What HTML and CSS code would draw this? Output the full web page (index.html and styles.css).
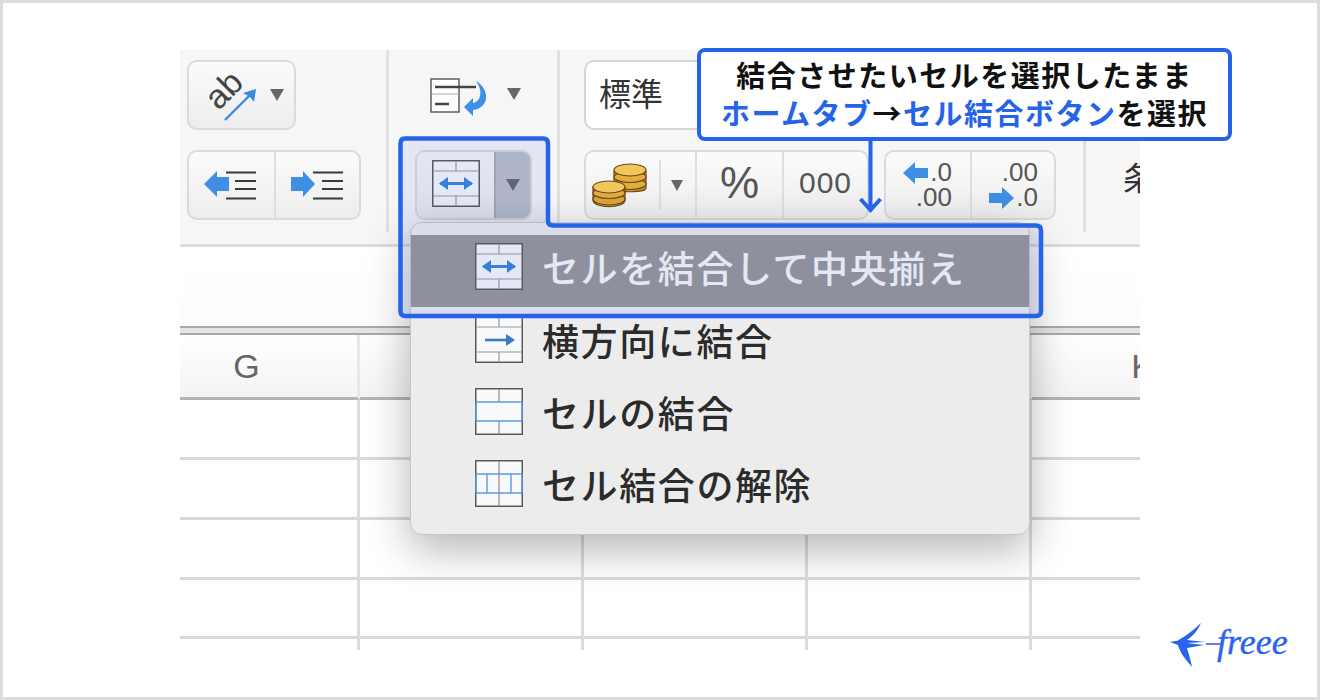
FILE: index.html
```html
<!DOCTYPE html>
<html lang="ja">
<head>
<meta charset="utf-8">
<title>セルの結合</title>
<link rel="stylesheet" href="styles.css">
</head>
<body>
<div class="frame">
  <div class="stage">
    <div class="ribbon">
      <div class="group group-a">
        <div class="btn btn-orient">
          <svg width="68" height="66" viewBox="0 0 68 66">
            <text x="22" y="39" text-anchor="middle" transform="rotate(-45 22 28)" class="ab">ab</text>
            <path d="M23 58 L50 31" stroke="#3b8ae0" stroke-width="2.400" fill="none"/>
            <path d="M54 27 L52 40 L48 35 L41 31 Z" fill="#3b8ae0"/>
          </svg>
          <span class="caret"></span>
        </div>
        <div class="btn btn-row btn-indent">
          <div class="seg seg-indent seg-indent-l">
            <svg width="52" height="30" viewBox="0 0 52 30">
              <path d="M0 14 L13 1 V7 H25 V21 H13 V27 Z" fill="#3f8fe6"/>
              <path d="M22 2.500H52 M31 11H52 M31 19H52 M22 28.500H52" stroke="#3a3a3a" stroke-width="2.200"/>
            </svg>
          </div>
          <div class="seg seg-indent">
            <svg width="52" height="30" viewBox="0 0 52 30">
              <path d="M24 14 L12 1 V7 H0 V21 H12 V27 Z" fill="#3f8fe6"/>
              <path d="M22 2.500H52 M31 11H52 M31 19H52 M22 28.500H52" stroke="#3a3a3a" stroke-width="2.200"/>
            </svg>
          </div>
        </div>
      </div>

      <div class="group group-b">
        <div class="wrap-row">
          <svg width="60" height="40" viewBox="0 0 60 40">
            <rect x="1" y="2" width="28" height="33" fill="#fff" stroke="#555" stroke-width="1.400"/>
            <path d="M1 17H29" stroke="#aaa" stroke-width="1"/>
            <path d="M5 10H46 M5 27H19" stroke="#444" stroke-width="2.400"/>
            <path d="M46 4 C60 12 60 31 43 33 L43 39 L34 30 L43 21 L43 26 C50 25 54 15 46 4Z" fill="#3f8fe6"/>
          </svg>
          <span class="caret"></span>
        </div>
        <div class="btn btn-row btn-merge">
          <div class="seg seg-merge-main">
            <svg class="merge-icon" width="48" height="47" viewBox="0 0 48 47"><use href="#cells"/><path d="M8 23.500H40" stroke="#3584dc" stroke-width="3"/><path d="M7 23.500L16 17V30Z M41 23.500L32 17V30Z" fill="#3584dc"/></svg>
          </div>
          <div class="seg seg-merge-drop"><span class="caret"></span></div>
        </div>
      </div>

      <div class="group group-c">
        <div class="field">標準</div>
        <div class="row-c">
          <div class="btn btn-row btn-num">
            <div class="seg seg-coins">
              <svg width="56" height="46" viewBox="0 0 56 46">
                <g stroke="#6b4a14" stroke-width="1.200" fill="#c9952f">
                  <path d="M22 9 V26 C22 31 54 31 54 26 V9 Z"/>
                  <ellipse cx="38" cy="22" rx="16" ry="5.500" fill="#e2ac3f"/>
                  <ellipse cx="38" cy="15" rx="16" ry="5.500" fill="#e2ac3f"/>
                  <ellipse cx="38" cy="8" rx="16" ry="6" fill="#f1c65a"/>
                  <path d="M1 25 V38 C1 47 33 47 33 38 V25 Z"/>
                  <ellipse cx="17" cy="37" rx="16" ry="6" fill="#dca53b"/>
                  <ellipse cx="17" cy="31" rx="16" ry="5.500" fill="#e2ac3f"/>
                  <ellipse cx="17" cy="25" rx="16" ry="6" fill="#f1c65a"/>
                </g>
              </svg>
            </div>
            <div class="seg seg-coin-drop"><span class="caret caret-sm"></span></div>
            <div class="seg seg-pct">%</div>
            <div class="seg seg-thou">000</div>
          </div>
          <div class="btn btn-row btn-dec">
            <div class="seg seg-dec">
              <div class="dec-line"><svg width="25" height="24" viewBox="0 0 25 24"><path d="M0 12 L12 1 V7 H25 V17 H12 V23Z" fill="#3f8fe6"/></svg><span>.0</span></div>
              <div class="dec-line"><span>.00</span></div>
            </div>
            <div class="seg seg-dec seg-dec-r">
              <div class="dec-line"><span>.00</span></div>
              <div class="dec-line"><svg width="25" height="24" viewBox="0 0 25 24"><path d="M25 12 L13 1 V7 H0 V17 H13 V23Z" fill="#3f8fe6"/></svg><span>.0</span></div>
            </div>
          </div>
        </div>
      </div>

      <div class="group group-d"><span class="cond">条</span></div>
    </div>

    <div class="band"></div>
    <div class="rule"></div>

    <div class="sheet">
      <div class="cell head">G</div><div class="cell head"></div><div class="cell head"></div><div class="cell head"></div><div class="cell head">K</div>
      <div class="cell"></div><div class="cell"></div><div class="cell"></div><div class="cell"></div><div class="cell"></div>
      <div class="cell"></div><div class="cell"></div><div class="cell"></div><div class="cell"></div><div class="cell"></div>
      <div class="cell"></div><div class="cell"></div><div class="cell"></div><div class="cell"></div><div class="cell"></div>
      <div class="cell"></div><div class="cell"></div><div class="cell"></div><div class="cell"></div><div class="cell"></div>
      <div class="cell end"></div><div class="cell end"></div><div class="cell end"></div><div class="cell end"></div><div class="cell end"></div>
    </div>
  </div>

  <div class="menu">
    <div class="item selected">
      <svg width="48" height="47" viewBox="0 0 48 47"><use href="#cells"/><path d="M8 23.500H40" stroke="#3584dc" stroke-width="3"/><path d="M7 23.500L16 17V30Z M41 23.500L32 17V30Z" fill="#3584dc"/></svg>
      <span>セルを結合して中央揃え</span>
    </div>
    <div class="item">
      <svg width="48" height="47" viewBox="0 0 48 47"><use href="#cells"/><path d="M10 24H36" stroke="#3a7cc9" stroke-width="2.600"/><path d="M40 24L31 18V30Z" fill="#3a7cc9"/></svg>
      <span>横方向に結合</span>
    </div>
    <div class="item">
      <svg width="48" height="47" viewBox="0 0 48 47"><use href="#frame-only"/><path d="M24 1V14 M24 33V46" stroke="#777" stroke-width="1"/><path d="M1 14H47 M1 33H47 M1 14V33 M47 14V33" stroke="#5b9be0" stroke-width="1.400" fill="none"/></svg>
      <span>セルの結合</span>
    </div>
    <div class="item">
      <svg width="48" height="47" viewBox="0 0 48 47"><use href="#frame-only"/><path d="M24 1V46" stroke="#777" stroke-width="1"/><path d="M1 14H47 M1 33H47 M12 14V33 M36 14V33 M1 14V33 M47 14V33" stroke="#5b9be0" stroke-width="1.400" fill="none"/></svg>
      <span>セル結合の解除</span>
    </div>
  </div>

  <svg class="marks" width="1320" height="700" viewBox="0 0 1320 700">
    <path class="mark-area" d="M405 138.500H543Q548 138.500 548 143.500V220.500Q548 225.500 553 225.500H1036Q1041 225.500 1041 230.500V311Q1041 316 1036 316H405Q400.500 316 400.500 311V143.500Q400.500 138.500 405 138.500Z"/>
    <path class="mark-line" d="M870.500 140V210 M860.500 199L870.500 210L880.500 199"/>
  </svg>

  <div class="callout">
    <p>結合させたいセルを選択したまま</p>
    <p><em>ホームタブ</em>→<em>セル結合ボタン</em>を選択</p>
  </div>

  <div class="logo">
    <svg width="52" height="48" viewBox="0 0 52 48">
      <path d="M0 20 C3 19 5 19 7 19 C14 15 24 8 31 1 C28 8 23 14 17 18 L35 20 L17 21 L34 23 L17 26 C19 33 21 39 22 45 C16 38 10 31 8 23 C5 22 3 21 0 20Z" fill="#2864ee"/>
      <path d="M36 22H52" stroke="#2864ee" stroke-width="1.600"/>
    </svg>
    <span class="logo-word">freee</span>
  </div>

  <svg class="defs" width="0" height="0">
    <defs>
      <g id="frame-only">
        <rect x="0.750" y="0.750" width="46.500" height="45.500" fill="#f8f9fb" stroke="#5a5a5a" stroke-width="1.500"/>
      </g>
      <g id="cells">
        <use href="#frame-only"/>
        <path d="M1 11H47 M1 36H47 M24 1V11 M24 36V46" stroke="#9a9a9a" stroke-width="1.200"/>
      </g>
    </defs>
  </svg>
</div>
</body>
</html>
```
FILE: styles.css
```css
* { box-sizing: border-box; }
html, body { margin: 0; padding: 0; }
body {
  width: 1320px;
  height: 700px;
  overflow: hidden;
  background: #fff;
  font-family: "Noto Sans CJK JP", sans-serif;
}
.frame {
  position: relative;
  width: 1320px;
  height: 700px;
  padding: 50px 0 0 180px;
  box-shadow: inset 0 0 0 3px #dcdcdc;
}
.stage {
  width: 960px;
  height: 600px;
  overflow: hidden;
  display: flex;
  flex-direction: column;
}

/* ribbon */
.ribbon {
  height: 197px;
  flex: none;
  display: flex;
  align-items: flex-start;
  background: #f6f6f6;
  border-bottom: 3px solid #dddddd;
}
.group {
  height: 182px;
  display: flex;
  flex-direction: column;
  gap: 20px;
  padding-top: 10px;
  border-right: 3px solid #e0e0e0;
  flex: none;
}
.group-a { width: 209px; padding-left: 7px; }
.group-b { width: 171px; padding-left: 26px; }
.group-c { width: 526px; padding-left: 24px; }
.group-d { border-right: 0; padding: 108px 0 0 37px; }
.btn {
  height: 70px;
  border: 2px solid #dadada;
  border-radius: 10px;
  background: linear-gradient(#fbfbfb, #ededed);
  flex: none;
}
.btn-row { display: flex; }
.btn-orient {
  width: 109px;
  display: flex;
  align-items: center;
  padding-left: 13px;
}
.ab {
  font-family: "Liberation Sans", sans-serif;
  font-size: 34px;
  fill: #444;
}
.caret {
  display: block;
  width: 0;
  height: 0;
  border-left: 7.500px solid transparent;
  border-right: 7.500px solid transparent;
  border-top: 12px solid #666;
  flex: none;
}
.caret-sm {
  border-left-width: 6.500px;
  border-right-width: 6.500px;
  border-top-width: 11px;
}
.seg {
  display: flex;
  align-items: center;
  justify-content: center;
  height: 100%;
}
.seg + .seg { border-left: 2px solid #dedede; }
.btn-indent { width: 174px; }
.seg-indent { flex: 1; padding-right: 2px; }
.seg-indent-l { padding-right: 4px; }
.wrap-row {
  height: 70px;
  padding: 17px 0 0 15px;
  display: flex;
  align-items: flex-start;
  gap: 17px;
}
.wrap-row .caret { margin-top: 11px; }
.btn-merge { width: 117px; overflow: hidden; }
.seg-merge-main { width: 77px; background: linear-gradient(#f6f6f6, #ededed); }
.merge-icon { margin-bottom: 4px; }
.seg.seg-merge-drop { flex: 1; background: #bcbfc8; border-left: 2px solid #a9abb3; }
.field {
  width: 220px;
  height: 70px;
  padding-left: 13px;
  background: #fff;
  border: 2px solid #d6d6d6;
  border-radius: 10px;
  font-size: 32px;
  line-height: 60px;
  color: #333;
}
.row-c { display: flex; gap: 15px; }
.btn-num { width: 285px; }
.seg-coins { width: 73px; padding-right: 6px; }
.seg.seg-coin-drop {
  width: 36px;
  border-left: 0;
  background: linear-gradient(#dedede, #dedede) left center / 2px 50px no-repeat;
}
.seg-pct {
  width: 87px;
  padding-bottom: 4px;
  font-family: "Liberation Sans", sans-serif;
  font-size: 44px;
  color: #555;
}
.seg-thou {
  flex: 1;
  padding-bottom: 4px;
  font-family: "Liberation Sans", sans-serif;
  font-size: 30px;
  letter-spacing: 1px;
  color: #555;
}
.btn-dec { width: 172px; }
.seg-dec {
  flex: 1;
  flex-direction: column;
  align-items: flex-end;
  padding-right: 18px;
  font-family: "Liberation Sans", sans-serif;
  font-size: 26px;
  color: #555;
  line-height: 25px;
}
.seg-dec-r { padding-right: 16px; }
.dec-line { display: flex; align-items: center; gap: 2px; height: 25px; }
.cond {
  display: block;
  width: 32px;
  font-size: 32px;
  line-height: 36px;
  color: #333;
}

/* sheet */
.band { height: 79px; flex: none; background: linear-gradient(#fff, #fdfdfd); }
.rule {
  height: 9px;
  flex: none;
  background: #e4e4e4;
  border-top: 2px solid #a8a8a8;
  border-bottom: 2px solid #a8a8a8;
}
.sheet {
  margin-left: -44px;
  display: grid;
  grid-template-columns: repeat(5, 224px);
  grid-template-rows: 65px 60px 60px 60px 59px 11px;
  flex: none;
}
.cell {
  border-right: 3px solid #dcdcdc;
  border-bottom: 3px solid #d8d8d8;
  background: #fff;
}
.cell.head {
  border-bottom-color: #b4b4b4;
  border-right-color: #e8e8e8;
  background: linear-gradient(#fff, #f4f4f4);
  font-family: "Liberation Sans", sans-serif;
  font-size: 34px;
  line-height: 62px;
  text-align: center;
  color: #666;
}
.cell.end { border-bottom: 0; }

/* dropdown */
.menu {
  position: absolute;
  left: 410px;
  top: 222px;
  width: 620px;
  height: 313px;
  padding-top: 12px;
  background: #ececec;
  border: 1px solid #c6c6c6;
  border-radius: 12px;
  box-shadow: 0 14px 44px rgba(0, 0, 0, 0.3);
  display: flex;
  flex-direction: column;
  overflow: hidden;
}
.item {
  display: flex;
  align-items: center;
  gap: 19px;
  padding-left: 64px;
  margin-top: 25px;
  height: 47px;
  font-size: 37px;
  font-weight: 500;
  letter-spacing: 1.600px;
  color: #2b2b2b;
  flex: none;
}
.item svg { flex: none; }
.item.selected {
  margin-top: 0;
  height: 72px;
  padding-top: 8px;
  padding-bottom: 17px;
  background: #979797;
  color: #f8f8f8;
}
.item.selected + .item { margin-top: 9px; }

/* annotations */
.marks { position: absolute; left: 0; top: 0; pointer-events: none; }
.mark-area {
  fill: rgba(65, 100, 215, 0.1);
  stroke: #2563e8;
  stroke-width: 4.500px;
}
.mark-line {
  fill: none;
  stroke: #2563e8;
  stroke-width: 4px;
}
.callout {
  position: absolute;
  left: 697px;
  top: 48px;
  width: 535px;
  height: 93px;
  padding-bottom: 3px;
  background: #fff;
  border: 4px solid #2563e8;
  border-radius: 8px;
  display: flex;
  flex-direction: column;
  align-items: center;
  justify-content: center;
  font-size: 29px;
  font-weight: 700;
  letter-spacing: 1.500px;
  line-height: 38px;
  color: #111;
}
.callout p { margin: 0; white-space: nowrap; }
.callout em { font-style: normal; color: #2563e8; }

/* logo */
.logo {
  position: absolute;
  left: 1170px;
  top: 622px;
  display: flex;
  align-items: flex-start;
  color: #2864ee;
}
.logo-word {
  margin-left: -5px;
  font-family: "Liberation Serif", serif;
  font-style: italic;
  font-size: 36px;
  line-height: 40px;
  -webkit-text-stroke: 0.4px #2864ee;
}
.defs { position: absolute; }
```
